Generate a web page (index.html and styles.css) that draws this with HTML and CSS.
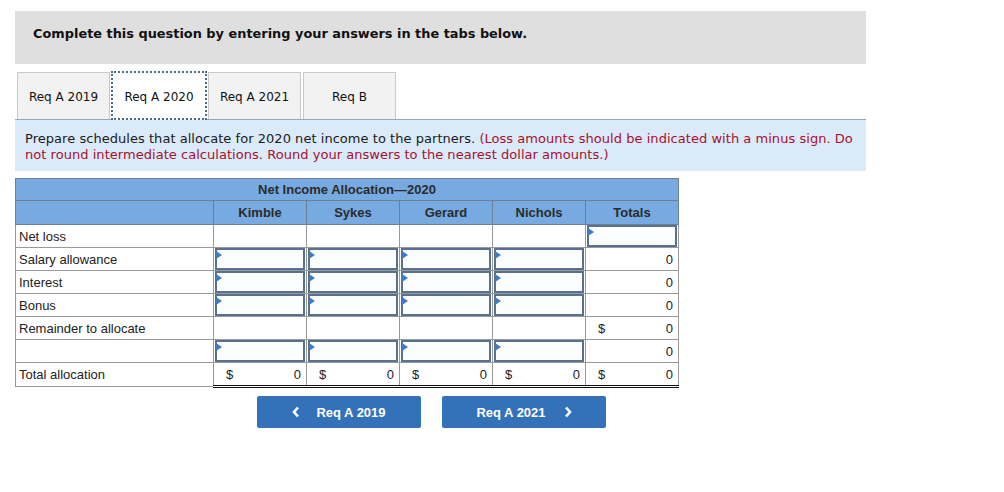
FILE: index.html
```html
<!DOCTYPE html>
<html>
<head>
<meta charset="utf-8">
<link rel="stylesheet" href="styles.css">
</head>
<body>
<div class="page">
  <div class="banner">Complete this question by entering your answers in the tabs below.</div>
  <div class="tabs">
    <div class="tab">Req A 2019</div>
    <div class="tab active">Req A 2020</div>
    <div class="tab">Req A 2021</div>
    <div class="tab">Req B</div>
  </div>
  <div class="instr"><span>Prepare schedules that allocate for 2020 net income to the partners. </span><span class="red">(Loss amounts should be indicated with a minus sign. Do</span><br><span class="red">not round intermediate calculations. Round your answers to the nearest dollar amounts.)</span></div>

  <table class="grid">
    <colgroup>
      <col class="c-label"><col class="c-num"><col class="c-num"><col class="c-num"><col class="c-num"><col class="c-num">
    </colgroup>
    <thead>
      <tr class="h1"><th colspan="6">Net Income Allocation—2020</th></tr>
      <tr class="h2"><th></th><th>Kimble</th><th>Sykes</th><th>Gerard</th><th>Nichols</th><th>Totals</th></tr>
    </thead>
    <tbody>
      <tr>
        <td class="lbl">Net loss</td>
        <td></td><td></td><td></td><td></td>
        <td class="in"><div class="box"></div></td>
      </tr>
      <tr>
        <td class="lbl">Salary allowance</td>
        <td class="in"><div class="box"></div></td><td class="in"><div class="box"></div></td><td class="in"><div class="box"></div></td><td class="in"><div class="box"></div></td>
        <td class="num">0</td>
      </tr>
      <tr>
        <td class="lbl">Interest</td>
        <td class="in"><div class="box"></div></td><td class="in"><div class="box"></div></td><td class="in"><div class="box"></div></td><td class="in"><div class="box"></div></td>
        <td class="num">0</td>
      </tr>
      <tr>
        <td class="lbl">Bonus</td>
        <td class="in"><div class="box"></div></td><td class="in"><div class="box"></div></td><td class="in"><div class="box"></div></td><td class="in"><div class="box"></div></td>
        <td class="num">0</td>
      </tr>
      <tr>
        <td class="lbl">Remainder to allocate</td>
        <td></td><td></td><td></td><td></td>
        <td class="num topline"><span class="cur">$</span>0</td>
      </tr>
      <tr>
        <td class="lbl"></td>
        <td class="in"><div class="box"></div></td><td class="in"><div class="box"></div></td><td class="in"><div class="box"></div></td><td class="in"><div class="box"></div></td>
        <td class="num">0</td>
      </tr>
      <tr class="total">
        <td class="lbl">Total allocation</td>
        <td class="num tot"><span class="cur">$</span>0</td>
        <td class="num tot"><span class="cur">$</span>0</td>
        <td class="num tot"><span class="cur">$</span>0</td>
        <td class="num tot"><span class="cur">$</span>0</td>
        <td class="num tot"><span class="cur">$</span>0</td>
      </tr>
    </tbody>
  </table>

  <div class="navs">
    <div class="btn"><svg class="chev" width="8" height="12" viewBox="0 0 8 12"><polyline points="6,1.5 2,6 6,10.5" fill="none" stroke="#fff" stroke-width="2.6"/></svg>Req A 2019</div>
    <div class="btn">Req A 2021<svg class="chev after" width="8" height="12" viewBox="0 0 8 12"><polyline points="2,1.5 6,6 2,10.5" fill="none" stroke="#fff" stroke-width="2.6"/></svg></div>
  </div>
</div>
</body>
</html>
```

FILE: styles.css
```css
html, body { margin: 0; padding: 0; background: #fff; }
.page { padding: 11px 0 0 15px; font-family: "DejaVu Sans", Verdana, sans-serif; }

.banner {
  width: 851px; height: 53px; box-sizing: border-box;
  background: #dfdfdf; padding: 15px 0 0 18px;
  font-weight: bold; font-size: 12.9px; color: #111; line-height: 16px;
}

.tabs { display: flex; margin: 7px 0 0 2px; height: 48px; gap: 0; }
.tab {
  width: 93px; height: 47px; box-sizing: border-box; margin-top: 1px;
  border: 1px solid #c9c9c9; border-bottom: none; background: #f2f2f2;
  display: flex; align-items: center; justify-content: center; padding-top: 2px;
  font-size: 12px; color: #111; margin-right: 1px;
}
.tab.active { background: #fff; border: 2px dotted #4d6c8a; height: 49px; margin-top: 0; width: 96px; }
.tab:nth-child(3) { margin-right: 2px; }

.instr {
  width: 851px; box-sizing: border-box; background: #dbeaf8;
  border-top: 1px solid #9aa6b2;
  padding: 11px 10px 8px 10px;
  font-size: 13px; line-height: 16px; color: #1a1a1a; letter-spacing: 0.04px;
}
.red { color: #a7102e; }

.grid {
  margin-top: 7px; border-collapse: collapse; table-layout: fixed;
  width: 664px; font-family: "Liberation Sans", Arial, sans-serif; font-size: 13px; color: #222;
}
.c-label { width: 198px; }
.c-num { width: 93px; }
.grid th { background: #76aae0; color: #2b2b2b; font-weight: bold; font-size: 13px; border: 1px solid #6e7f91; padding: 0; }
.h1 th { height: 21px; }
.h2 th { height: 23px; }
.grid td { border: 1px solid #9a9a9a; height: 22px; padding: 0; position: relative; }
.lbl { padding-left: 3px !important; text-align: left; }
.num { text-align: right; padding-right: 5px !important; }
.cur { float: left; padding-left: 12px; }
.topline { border-top: 1px solid #111 !important; }
.tot { border-top: 1px solid #111 !important; border-bottom: 3px double #111 !important; }
.in { padding: 0 !important; }
.box {
  position: absolute; left: 1px; right: 1px; top: 0; bottom: 0;
  border: 2px solid #58718f; background: #fbfdff;
}
.box::before {
  content: ""; position: absolute; left: -1px; top: 1px;
  border-left: 6px solid #3d7cc4; border-top: 4px solid transparent; border-bottom: 4px solid transparent;
}

.navs { display: flex; gap: 21px; margin: 8px 0 0 242px; }
.btn {
  width: 164px; height: 32px; background: #3372b8; border-radius: 2px;
  color: #fff; font-family: "Liberation Sans", Arial, sans-serif; font-weight: bold; font-size: 13px;
  display: flex; align-items: center; justify-content: center;
}
.chev { margin-right: 16px; }
.chev.after { margin-right: 0; margin-left: 18px; }
```
